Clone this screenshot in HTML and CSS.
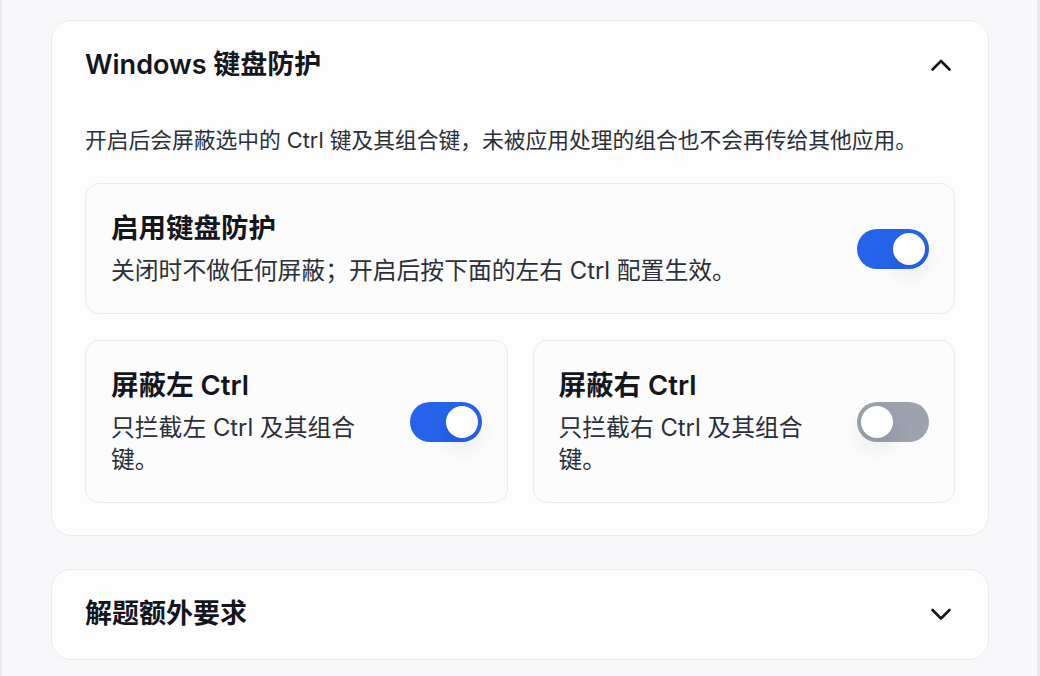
FILE: index.html
```html
<!DOCTYPE html>
<html lang="zh-CN">
<head>
<meta charset="utf-8">
<title>Windows 键盘防护</title>
<link rel="stylesheet" href="styles.css">
</head>
<body>
<div class="page">
  <section class="panel">
    <div class="panel-head">
      <h2 class="panel-title">Windows 键盘防护</h2>
      <svg class="chev" width="22" height="14" viewBox="0 0 22 14"><path d="M2.5 11.5 L11 3 L19.5 11.5" fill="none" stroke="#14161c" stroke-width="2.6" stroke-linecap="round" stroke-linejoin="round"/></svg>
    </div>
    <p class="panel-desc">开启后会屏蔽选中的 Ctrl 键及其组合键，未被应用处理的组合也不会再传给其他应用。</p>
    <div class="opt">
      <div class="opt-text">
        <div class="opt-title">启用键盘防护</div>
        <div class="opt-desc">关闭时不做任何屏蔽；开启后按下面的左右 Ctrl 配置生效。</div>
      </div>
      <span class="toggle on"><span class="knob"></span></span>
    </div>
    <div class="opt-grid">
      <div class="opt">
        <div class="opt-text">
          <div class="opt-title">屏蔽左 Ctrl</div>
          <div class="opt-desc">只拦截左 Ctrl 及其组合键。</div>
        </div>
        <span class="toggle on"><span class="knob"></span></span>
      </div>
      <div class="opt">
        <div class="opt-text">
          <div class="opt-title">屏蔽右 Ctrl</div>
          <div class="opt-desc">只拦截右 Ctrl 及其组合键。</div>
        </div>
        <span class="toggle"><span class="knob"></span></span>
      </div>
    </div>
  </section>
  <section class="panel collapsed">
    <div class="panel-head">
      <h2 class="panel-title">解题额外要求</h2>
      <svg class="chev" width="22" height="14" viewBox="0 0 22 14"><path d="M2.5 3 L11 11.5 L19.5 3" fill="none" stroke="#14161c" stroke-width="2.6" stroke-linecap="round" stroke-linejoin="round"/></svg>
    </div>
  </section>
</div>
</body>
</html>
```

FILE: styles.css
```css
* { box-sizing: border-box; }
html, body { margin: 0; padding: 0; }
body {
  font-family: "Inter", "Noto Sans CJK SC", sans-serif;
  color: #14161c;
  background: #f8f8fa;
}
.page {
  width: 1040px;
  height: 676px;
  overflow: hidden;
  background: #f8f8fa;
  border-left: 2px solid #e8eaf1;
  border-right: 3px solid #e8eaf1;
  padding: 20px 48px 0 49px;
  display: flex;
  flex-direction: column;
  gap: 33px;
}
.panel {
  background: #fdfdfe;
  border: 1px solid #ebebf0;
  border-radius: 20px;
  padding: 24px 33px 32px;
  flex-shrink: 0;
}
.panel.collapsed { padding-bottom: 25px; }
.panel-head {
  height: 40px;
  display: flex;
  align-items: center;
  justify-content: space-between;
}
.panel-title {
  margin: 0;
  font-size: 27px;
  font-weight: 600;
  line-height: 40px;
  color: #14161c;
}
.chev { margin-right: 3px; display: block; }
.panel-desc {
  margin: 39px 0 27px;
  font-size: 21.75px;
  line-height: 32px;
  color: #2b2f38;
}
.opt {
  background: #fdfcfd;
  border: 1px solid #ebebef;
  border-radius: 14px;
  padding: 26px 25px 26px;
  display: flex;
  align-items: center;
  gap: 24px;
}
.opt-text { flex: 1; min-width: 0; }
.opt-title {
  font-size: 27.5px;
  font-weight: 600;
  line-height: 36px;
  color: #14161c;
}
.opt-desc {
  margin-top: 9px;
  font-size: 23.8px;
  line-height: 32px;
  color: #2b2f38;
}
.opt-grid {
  margin-top: 26px;
  display: grid;
  grid-template-columns: 1fr 1fr;
  gap: 25px;
}
.toggle {
  flex-shrink: 0;
  width: 72px;
  height: 40px;
  border-radius: 20px;
  background: #9ca3af;
  padding: 4px;
  display: flex;
  justify-content: flex-start;
}
.toggle.on {
  background: #2563eb;
  justify-content: flex-end;
}
.knob {
  width: 32px;
  height: 32px;
  border-radius: 50%;
  background: #ffffff;
  box-shadow: 0 10px 22px rgba(15, 23, 42, 0.10);
}
```
